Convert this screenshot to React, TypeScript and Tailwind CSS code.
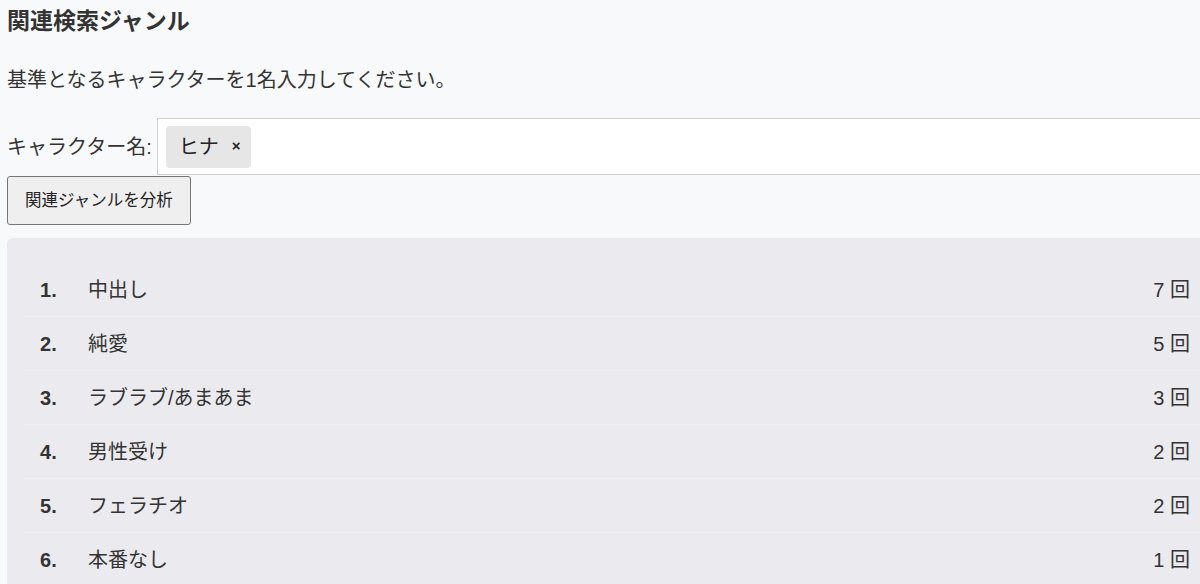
import React from "react";

const FONT = '"Liberation Sans", "Noto Sans CJK JP", sans-serif';

const GENRES = [
  { name: "中出し", count: 7 },
  { name: "純愛", count: 5 },
  { name: "ラブラブ/あまあま", count: 3 },
  { name: "男性受け", count: 2 },
  { name: "フェラチオ", count: 2 },
  { name: "本番なし", count: 1 },
];

export default function App() {
  return (
    <div
      className="min-h-screen overflow-hidden bg-[#f8f9fa] pl-[7px] text-[#333]"
      style={{ fontFamily: FONT }}
    >
      <h3 className="pt-[7px] text-[23px] font-bold leading-[28px]">関連検索ジャンル</h3>

      <p className="mt-[30px] text-[20px] leading-[30px]">
        基準となるキャラクターを1名入力してください。
      </p>

      <div className="mt-[23px] flex items-center">
        <label className="mr-[5px] whitespace-nowrap text-[20px]">キャラクター名:</label>
        <div className="flex h-[57px] min-w-[1100px] flex-1 items-center border border-[#cfcfcf] bg-white pl-[8px]">
          <span className="flex h-[42px] items-center rounded-[4px] bg-[#e6e6e6] pl-[13px] pr-[10px] text-[20px] text-[#222]">
            ヒナ
            <span className="ml-[13px] text-[15px] font-bold">×</span>
          </span>
        </div>
      </div>

      <button className="mt-[1px] h-[49px] rounded-[3px] border border-[#767676] bg-[#efefef] px-[17px] text-[16.5px] text-[#222]">
        関連ジャンルを分析
      </button>

      <div className="mt-[13px] rounded-tl-[6px] bg-[#ebebef] pl-[16px] pt-[25px]">
        {GENRES.map((g, i) => (
          <div
            key={g.name}
            className="flex h-[54px] items-center border-b border-[#efeff2] pl-[17px] pr-[10px]"
          >
            <span className="w-[48px] text-[20px] font-bold">{i + 1}.</span>
            <span className="flex-1 text-[20px]">{g.name}</span>
            <span className="text-[20px]">{g.count} 回</span>
          </div>
        ))}
      </div>
    </div>
  );
}
